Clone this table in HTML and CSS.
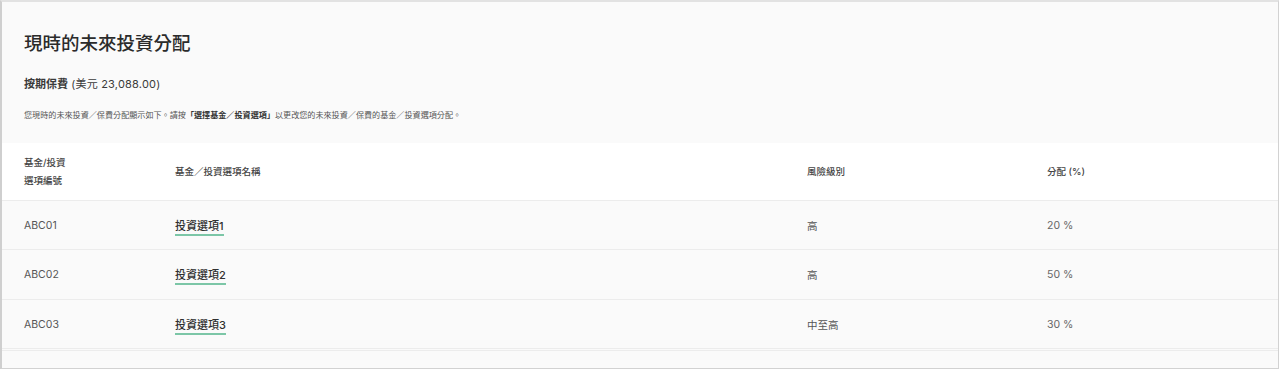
FILE: index.html
```html
<!DOCTYPE html>
<html lang="zh-Hant">
<head>
<meta charset="utf-8">
<title>現時的未來投資分配</title>
<link rel="stylesheet" href="styles.css">
</head>
<body>
<div class="frame">
  <section class="intro">
    <h1 class="title">現時的未來投資分配</h1>
    <p class="premium"><strong>按期保費</strong> (美元 23,088.00)</p>
    <p class="desc">您現時的未來投資／保費分配顯示如下。請按<strong>「選擇基金／投資選項」</strong>以更改您的未來投資／保費的基金／投資選項分配。</p>
  </section>
  <div class="table">
    <div class="row head">
      <div class="cell c1">基金/投資<br>選項編號</div>
      <div class="cell">基金／投資選項名稱</div>
      <div class="cell">風險級別</div>
      <div class="cell">分配 (%)</div>
    </div>
    <div class="row">
      <div class="cell c1">ABC01</div>
      <div class="cell"><a class="fund" href="#">投資選項1</a></div>
      <div class="cell">高</div>
      <div class="cell pct">20 %</div>
    </div>
    <div class="row mid">
      <div class="cell c1">ABC02</div>
      <div class="cell"><a class="fund" href="#">投資選項2</a></div>
      <div class="cell">高</div>
      <div class="cell pct">50 %</div>
    </div>
    <div class="row last">
      <div class="cell c1">ABC03</div>
      <div class="cell"><a class="fund" href="#">投資選項3</a></div>
      <div class="cell">中至高</div>
      <div class="cell pct">30 %</div>
    </div>
  </div>
</div>
</body>
</html>
```

FILE: styles.css
```css
* { box-sizing: border-box; }
html, body {
  margin: 0;
  padding: 0;
  background: #ffffff;
}
body {
  font-family: Inter, "Noto Sans CJK TC", "Noto Sans", sans-serif;
  color: #333;
}
.frame {
  width: 1279px;
  height: 369px;
  border: 1px solid #d2d2d2;
  border-left: 2px solid #cfcfcf;
  border-top: 2px solid #e2e2e2;
  background: #fafafa;
  overflow: hidden;
}
.intro {
  padding: 0 22px;
  display: flex;
  flex-direction: column;
}
.title {
  margin: 28px 0 0;
  font-size: 18.5px;
  line-height: 26px;
  font-weight: 500;
  color: #2b2b2b;
}
.premium {
  margin: 20px 0 0;
  font-size: 11px;
  line-height: 16px;
  color: #3a3a3a;
  letter-spacing: 0.2px;
}
.premium strong { font-weight: 600; letter-spacing: 0; }
.desc {
  margin: 17px 0 0;
  font-size: 8.1px;
  line-height: 12px;
  color: #555;
}
.desc strong { font-weight: 700; color: #333; }
.table {
  margin-top: 22px;
  display: flex;
  flex-direction: column;
}
.row {
  display: grid;
  grid-template-columns: 173px 632px 240px 1fr;
  align-items: center;
  height: 49px;
  border-bottom: 1px solid #ececec;
  font-size: 10.5px;
  color: #555;
}
.row.mid { height: 50px; }
.row.last {
  height: 51px;
  border-bottom: 3px double #ececec;
}
.row.head {
  height: 58px;
  background: #ffffff;
  font-size: 9.5px;
  line-height: 18px;
  color: #444;
  font-weight: 500;
}
.c1 { padding-left: 22px; }
.pct { color: #666; }
.fund {
  display: inline-block;
  color: #2f2f2f;
  font-size: 11px;
  line-height: 14px;
  font-weight: 500;
  text-decoration: none;
  border-bottom: 2px solid #7cc6a7;
  padding-bottom: 1px;
  margin-top: 4px;
}
```
